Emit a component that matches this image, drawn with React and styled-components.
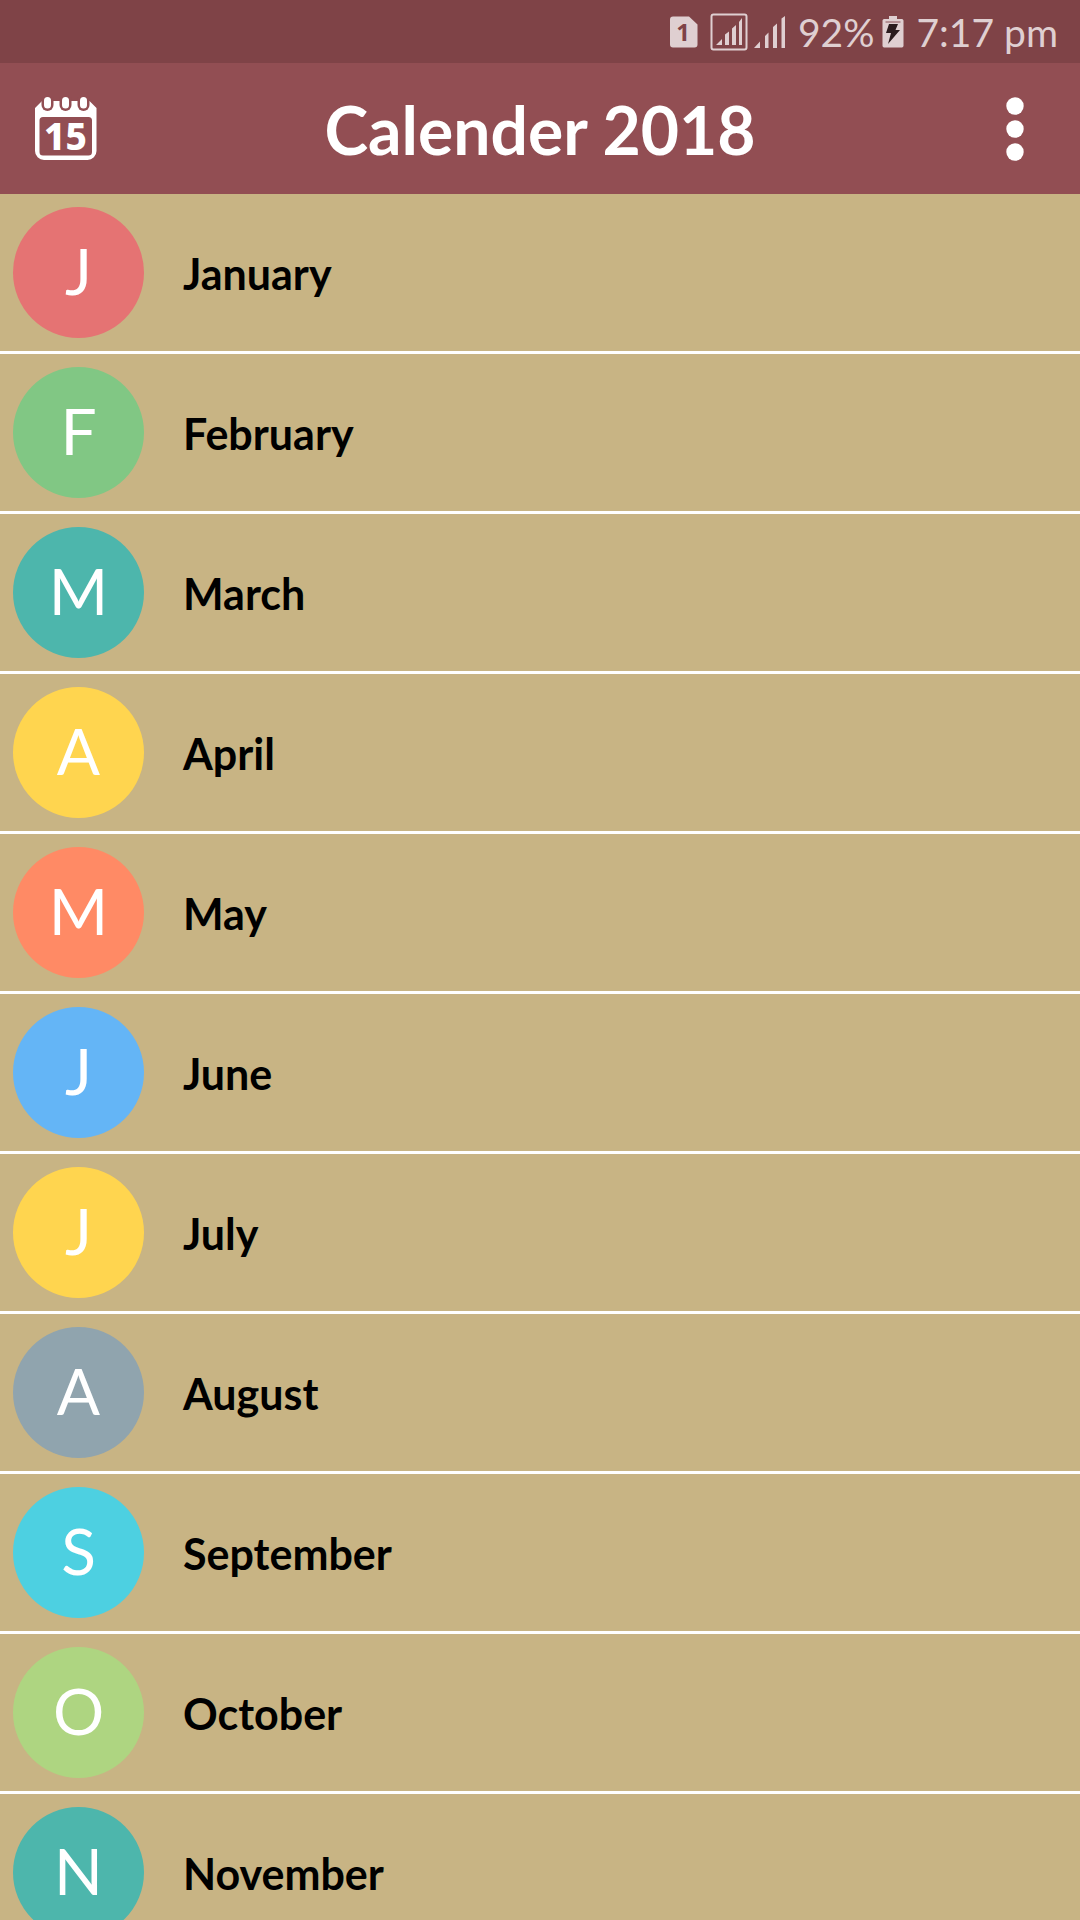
import React from "react";
import styled, { createGlobalStyle } from "styled-components";

const months = [
  { name: "January", color: "#e57373" },
  { name: "February", color: "#81c784" },
  { name: "March", color: "#4db6ac" },
  { name: "April", color: "#ffd54f" },
  { name: "May", color: "#ff8a65" },
  { name: "June", color: "#64b5f6" },
  { name: "July", color: "#ffd54f" },
  { name: "August", color: "#90a4ae" },
  { name: "September", color: "#4dd0e1" },
  { name: "October", color: "#aed581" },
  { name: "November", color: "#4db6ac" },
];

const SimIcon = () => (
  <svg width="28" height="32" viewBox="0 0 28 32" aria-hidden="true">
    <path d="M3 0.5H19L27.500 8.500V28.500a3 3 0 0 1-3 3H3a3 3 0 0 1-3-3V3.500a3 3 0 0 1 3-3z" fill="#dfcfd1" />
    <text x="13" y="25" textAnchor="middle" fontFamily="Noto Sans, sans-serif" fontWeight="700" fontSize="24" fill="#7f4347">
      1
    </text>
  </svg>
);

const BoxedSignalIcon = () => (
  <svg width="38" height="38" viewBox="0 0 38 38" fill="#dfcfd1" aria-hidden="true">
    <rect x="1.500" y="1.500" width="35" height="35" rx="2" fill="none" stroke="#dfcfd1" strokeWidth="2" />
    <path d="M6 32L12 26V32z M15 21.500L19 18.500V32H15z M22 15.500L26 12V32H22z M29 9L32 5V32H29z" />
  </svg>
);

const SignalIcon = () => (
  <svg width="32" height="32" viewBox="0 0 32 32" fill="#dfcfd1" aria-hidden="true">
    <path d="M0 32L6 25.500V32z M11 20L14.500 16.500V32H11z M19 11L23 7.500V32H19z M27.500 2.500L31 0V32H27.500z" />
  </svg>
);

const BatteryIcon = () => (
  <svg width="22" height="32" viewBox="0 0 22 32" aria-hidden="true">
    <path d="M7 0H15V3H20a2 2 0 0 1 1.500 1.500V30a2 2 0 0 1-1.500 1.500H2A2 2 0 0 1 0.500 30V4.500A2 2 0 0 1 2 3H7z" fill="#dfcfd1" />
    <path d="M3.500 6H18.500" stroke="#a67c80" strokeWidth="1.500" />
    <path d="M7 8H16L13.500 14H18L6 28L9 17H4z" fill="#2b1c1e" />
  </svg>
);

const CalendarIcon = () => (
  <svg width="62" height="64" viewBox="0 0 62 64" aria-hidden="true">
    <path
      fillRule="evenodd"
      fill="#fff"
      d="M7 4H54.500L61.500 11V54a9 9 0 0 1-9 9H9a9 9 0 0 1-9-9V11z M8 20a3.500 3.500 0 0 0-3.500 3.500V55a3.500 3.500 0 0 0 3.500 3.500H53.500a3.500 3.500 0 0 0 3.500-3.500V23.500a3.500 3.500 0 0 0-3.500-3.500z"
    />
    {[12.5, 30.5, 48.5].map((x) => (
      <g key={x}>
        <path d={`M${x} 3V8`} stroke="#924e53" strokeWidth="12" strokeLinecap="round" />
        <path d={`M${x} 3.500V8`} stroke="#fff" strokeWidth="7" strokeLinecap="round" />
      </g>
    ))}
    <text x="30.500" y="53" textAnchor="middle" fontFamily="Noto Sans, sans-serif" fontWeight="800" fontSize="37" fill="#fff">
      15
    </text>
  </svg>
);

const MoreIcon = () => (
  <svg width="18" height="64" viewBox="0 0 18 64" fill="#fff" aria-hidden="true">
    <circle cx="9" cy="9" r="8.700" />
    <circle cx="9" cy="32" r="8.700" />
    <circle cx="9" cy="55" r="8.700" />
  </svg>
);

const App = () => {
  return (
    <>
      <GlobalStyle />
      <Screen>
        <StatusBar>
          <SimIcon />
          <Signals>
            <BoxedSignalIcon />
            <SignalIcon />
          </Signals>
          <Battery>
            <span>92%</span>
            <BatteryIcon />
          </Battery>
          <span>7:17 pm</span>
        </StatusBar>
        <Header>
          <IconButton aria-label="Today">
            <CalendarIcon />
          </IconButton>
          <Title>Calender 2018</Title>
          <IconButton aria-label="More options">
            <MoreIcon />
          </IconButton>
        </Header>
        <MonthList>
          {months.map(({ name, color }) => (
            <MonthItem key={name}>
              <MonthButton>
                <Avatar $color={color}>{name[0]}</Avatar>
                <MonthName>{name}</MonthName>
              </MonthButton>
            </MonthItem>
          ))}
        </MonthList>
      </Screen>
    </>
  );
};

export default App;

const GlobalStyle = createGlobalStyle`
  * {
    box-sizing: border-box;
  }

  body {
    margin: 0;
    font-family: Lato, "Noto Sans", sans-serif;
  }

  button {
    padding: 0;
    border: none;
    background: none;
    font: inherit;
    color: inherit;
    cursor: pointer;
  }

  svg {
    display: block;
    flex-shrink: 0;
  }
`;

const Screen = styled.div`
  display: flex;
  flex-direction: column;
  height: 100vh;
  background-color: #c8b484;
`;

const StatusBar = styled.div`
  display: flex;
  align-items: center;
  justify-content: flex-end;
  gap: 12px;
  flex-shrink: 0;
  height: 63px;
  padding-right: 22px;
  background-color: #7f4347;
  color: #dfcfd1;
  font-size: 39px;
`;

const Signals = styled.div`
  display: flex;
  align-items: center;
  gap: 6px;
`;

const Battery = styled.div`
  display: flex;
  align-items: center;
  gap: 8px;
`;

const Header = styled.header`
  display: flex;
  align-items: center;
  justify-content: space-between;
  flex-shrink: 0;
  height: 131px;
  background-color: #924e53;
  color: #fff;
`;

const IconButton = styled.button`
  display: flex;
  align-items: center;
  justify-content: center;
  width: 131px;
  height: 131px;
`;

const Title = styled.h1`
  margin: 0;
  padding-top: 2px;
  font-size: 66px;
  font-weight: 700;
`;

const MonthList = styled.ul`
  flex: 1;
  min-height: 0;
  margin: 0;
  padding: 0;
  overflow-y: auto;
  scrollbar-width: none;
  list-style: none;
`;

const MonthItem = styled.li`
  border-bottom: 3px solid #fff;
`;

const MonthButton = styled.button`
  display: flex;
  align-items: center;
  gap: 39px;
  width: 100%;
  padding: 13px;
  text-align: left;
`;

const Avatar = styled.span`
  display: flex;
  align-items: center;
  justify-content: center;
  width: 131px;
  height: 131px;
  padding-bottom: 5px;
  border-radius: 50%;
  background-color: ${({ $color }) => $color};
  color: #fff;
  font-size: 64px;
`;

const MonthName = styled.span`
  padding-top: 2px;
  color: #000;
  font-size: 43px;
  font-weight: 700;
`;
